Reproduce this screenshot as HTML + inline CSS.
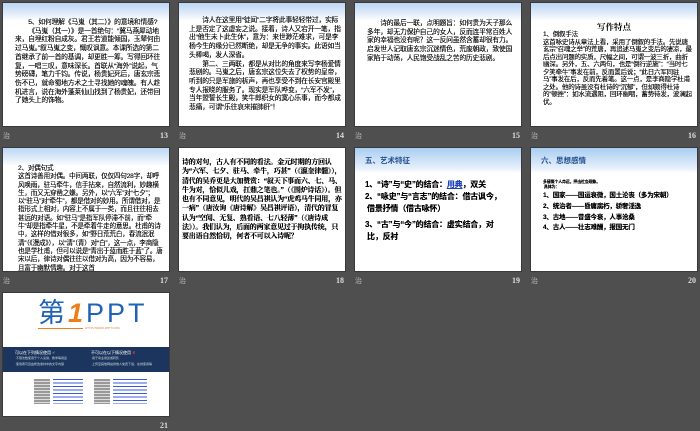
<!DOCTYPE html>
<html><head><meta charset="utf-8"><style>
*{margin:0;padding:0;box-sizing:border-box}
body{width:700px;height:431px;background:#4f4f4f;position:relative;overflow:hidden;font-family:"Liberation Sans","Noto Sans CJK SC",sans-serif}
.s{position:absolute;width:168px;height:125px;background:#fff;overflow:hidden;border:1px solid #3a3a3a}
.g{background:linear-gradient(#bcd7f5 0,#dbe9f8 9px,#fff 18px)}
.t{position:absolute;font-size:6.8px;line-height:8.7px;color:#111;letter-spacing:-0.2px;text-shadow:0 0 0.3px #000}
.b{font-weight:bold;color:#000}
.lb{position:absolute;font-size:7px;color:#bbb;font-family:"Liberation Sans","Noto Sans CJK SC",sans-serif}
.n{position:absolute;font-size:8px;color:#ddd;font-weight:bold;font-family:"Liberation Serif",serif;text-align:right;width:30px}
.hd{position:absolute;left:0;top:0;width:100%;height:25px;background:linear-gradient(#a9cdf2,#e6f0fb 20px,#fff)}
.h1{position:absolute;left:10px;top:7px;font-size:7.5px;font-weight:bold;color:#1f4e8c}
</style></head><body>

<div class="s g" style="left:2px;top:2px">
<div class="t" style="left:12px;top:16px;width:148px">&emsp;&emsp;5、如何理解《马嵬（其二）》的意境和情感?<br>&emsp;&emsp;《马嵬（其一）》是一首绝句：“冀马燕犀动地来，自埋红粉自成灰。君王若道能倾国，玉辇何由过马嵬。”叙马嵬之变，慨叹讽意。本课所选的第二首继承了前一首的基调，却更胜一筹。写得回环往复，一唱三叹，意味深长。首联从“海外”说起，气势磅礴，笔力千钧。传说，杨贵妃死后，唐玄宗悲伤不已，就命蜀地方术之士寻找她的魂魄。有人趁机进言，说在海外蓬莱仙山找到了杨贵妃，还带回了她头上的饰物。</div></div>
<div class="lb" style="left:3px;top:131px">治</div><div class="n" style="left:138px;top:131px">13</div>

<div class="s g" style="left:178px;top:2px">
<div class="t" style="left:10px;top:14px;width:152px">&emsp;&emsp;诗人在这里用“徒闻”二字将此事轻轻带过，实际上是否定了这虚妄之说。接着，诗人又宕开一笔，指出“他生未卜此生休”，意为：来世渺茫难求，可是李杨今生的缘分已然断绝，却是无争的事实。此语如当头棒喝，发人深省。<br>&emsp;&emsp;第二、三两联，都是从对比的角度来写李杨爱情悲剧的。马嵬之后，唐玄宗这位失去了权势的皇帝，听到的只是军旅的柝声，再也享受不到在长安宫殿里专人报晓的服务了。现实是军队哗变，“六军不发”，当年盟誓长生殿，笑牛郎织女的寞心乐事，而今都成悲痛，可谓“乐往哀来摧肺肝”！</div></div>
<div class="lb" style="left:179px;top:131px">治</div><div class="n" style="left:314px;top:131px">14</div>

<div class="s g" style="left:354px;top:2px">
<div class="t" style="left:12px;top:17px;width:148px">&emsp;&emsp;诗的最后一联，点明题旨：如何贵为天子那么多年，却无力保护自己的女人，反而连平常百姓人家的幸福也没有呢？这一反问虽然含蓄却很有力。启发世人记取唐玄宗沉迷情色，荒废朝政，致使国家陷于动荡，人民饱受战乱之苦的历史悲剧。</div></div>
<div class="lb" style="left:355px;top:131px">治</div><div class="n" style="left:490px;top:131px">15</div>

<div class="s g" style="left:530px;top:2px">
<div style="position:absolute;left:0;width:100%;top:18px;text-align:center;font-size:8.5px;font-weight:bold;font-family:'Liberation Serif','Noto Serif CJK SC',serif">写作特点</div>
<div class="t" style="left:12px;top:28px;width:150px;line-height:7.5px;font-size:6.5px">1、倒叙手法<br>这首咏史诗从章法上看，采用了倒叙的手法。先说唐玄宗“召魂之举”的荒唐，再追述马嵬之变后的凄凉，最后点出问题的实质，尺幅之间，可谓一波三折，曲折幽深。另外，五、六两句，也是“倒行逆施”：“当时七夕笑牵牛”事发在前，反而置后说；“此日六军同驻马”事发在后，反而先着笔。这一点，是李商隐学杜甫之处。他的诗虽没有杜诗的“沉郁”，但却颇得杜诗的“顿挫”：如水流遇阻，回环幽咽，蓄势待发，波澜起伏。</div></div>
<div class="lb" style="left:531px;top:131px">治</div><div class="n" style="left:666px;top:131px">16</div>

<div class="s g" style="left:2px;top:147px">
<div class="t" style="left:15px;top:17px;width:146px;line-height:8.3px;font-size:6.6px">2、对偶句式<br>这首诗善用对偶。中间两联，仅仅四句28字，却呼风唤雨，驻马牵牛，信手拈来，自然流利，妙趣横生，而又无穿凿之嫌。另外，以“六军”对“七夕”；以“驻马”对“牵牛”，都是借对的妙用。所谓借对，是指形式上相对，内容上不属于一类，而且往往相去甚远的对语。如“驻马”是指军队停滞不前，而“牵牛”却是指牵牛星，不是牵着牛走的意思。杜甫的诗中，这样的借对很多，如“野日荒荒白，春流泯泯清”（《漫成》），以“清”（青）对“白”，这一点，李商隐也是学杜甫，但可以说是“青出于蓝而胜于蓝”了。唐宋以后，律诗对偶往往以借对为高，因为不容易，且富于幽默情趣。对于这首</div></div>
<div class="lb" style="left:3px;top:276px">治</div><div class="n" style="left:138px;top:276px">17</div>

<div class="s" style="left:178px;top:147px">
<div class="t b" style="left:3px;top:10px;width:160px;font-size:7px;line-height:9.3px;font-family:'Liberation Serif','Noto Serif CJK SC',serif">诗的对句，古人有不同的看法。金元时期的方回认为“六军、七夕、驻马、牵牛，巧甚”（《瀛奎律髓》），清代的吴乔更是大加赞赏：“叙天下事而六、七、马、牛为对，恰似儿戏，扛鼎之笔也。”（《围炉诗话》）。但也有不同意见，明代的吴昌祺认为“虎鸡马牛同用，亦一病”（唐汝询《唐诗解》吴昌祺评语），清代的冒复认为“空闻、无复、熟看语、七八轻薄”（《唐诗成法》）。我们认为，后面的两家意见过于拘执传统，只要出语自然恰切，何者不可以入诗呢？</div></div>
<div class="lb" style="left:179px;top:276px">治</div><div class="n" style="left:314px;top:276px">18</div>

<div class="s" style="left:354px;top:147px"><div class="hd"></div>
<div class="h1">五、艺术特征</div>
<div class="t b" style="left:10px;top:31px;width:155px;font-size:8px;line-height:12px">1、“诗”与“史”的结合：<span style="color:#1a44c8;text-decoration:underline">用典</span>，双关<br>2、“咏史”与“言志”的结合：借古讽今，<br>&nbsp;借景抒情（借古咏怀）<br><div style="height:4px"></div>3、“古”与“今”的结合：虚实结合，对<br>&nbsp;比，反衬</div></div>
<div class="lb" style="left:355px;top:276px">治</div><div class="n" style="left:490px;top:276px">19</div>

<div class="s" style="left:530px;top:147px"><div class="hd"></div>
<div class="h1">六、思想感情</div>
<div class="t b" style="left:12px;top:31px;font-size:4px;line-height:5px">多感慨个人命运，抨击社会现象。<br>&nbsp;具体为：</div>
<div class="t b" style="left:12px;top:43px;font-size:6.5px;line-height:10.8px;width:155px">1、国家——国运衰微，国土沦丧（多为宋朝）<br>2、统治者——昏庸腐朽，骄奢淫逸<br>3、古地——昔盛今衰，人事沧桑<br>4、古人——壮志难酬，报国无门</div></div>
<div class="lb" style="left:531px;top:276px">治</div><div class="n" style="left:666px;top:276px">20</div>

<div class="s" style="left:2px;top:292px">
<div style="position:absolute;left:35px;top:6px;font-size:27px;font-weight:normal;color:#1f64b4;letter-spacing:3px;font-family:'Liberation Sans','Noto Sans CJK SC',sans-serif;line-height:28px">第<span style="color:#ef7d1a;font-style:italic;font-weight:bold">1</span>PPT</div>
<div style="position:absolute;left:35px;top:35px;width:45px;height:1px;background:#ef7d1a"></div>
<div style="position:absolute;left:82px;top:33px;font-size:3px;color:#e08030">HTTP://WWW.1PPT.COM</div>
<div style="position:absolute;left:0;top:54px;width:100%;height:25px;background:#1c355e"></div>
<div style="position:absolute;left:12px;top:57px;font-size:4px;color:#fff;line-height:5px">可以在下列情况使用 <span style="color:#5c5">✔</span><br><span style="font-size:3px;color:#cdd">·不限次数使用于个人演讲、教学等用途<br>·使用者可自由修改素材中的文字内容</span></div>
<div style="position:absolute;left:88px;top:57px;font-size:4px;color:#fff;line-height:5px">不可以在以下情况使用 <span style="color:#e33">✘</span><br><span style="font-size:3px;color:#cdd">·用于商业用途或转售<br>·上传至其他网站供他人免费下载、在线使用等</span></div>
<div style="position:absolute;left:31px;top:86px;width:16px;height:25px;background:repeating-linear-gradient(#999 0 2px,#ddd 2px 3px)"></div>
<div style="position:absolute;left:50px;top:86px;width:30px;height:25px;background:repeating-linear-gradient(#3a5ae0 0 1px,#fff 1px 3.5px)"></div>
<div style="position:absolute;left:91px;top:86px;width:16px;height:25px;background:repeating-linear-gradient(#999 0 2px,#ddd 2px 3px)"></div>
<div style="position:absolute;left:110px;top:86px;width:34px;height:25px;background:repeating-linear-gradient(#3a5ae0 0 1px,#fff 1px 3.5px)"></div>
</div>
<div class="n" style="left:138px;top:421px">21</div>

</body></html>
